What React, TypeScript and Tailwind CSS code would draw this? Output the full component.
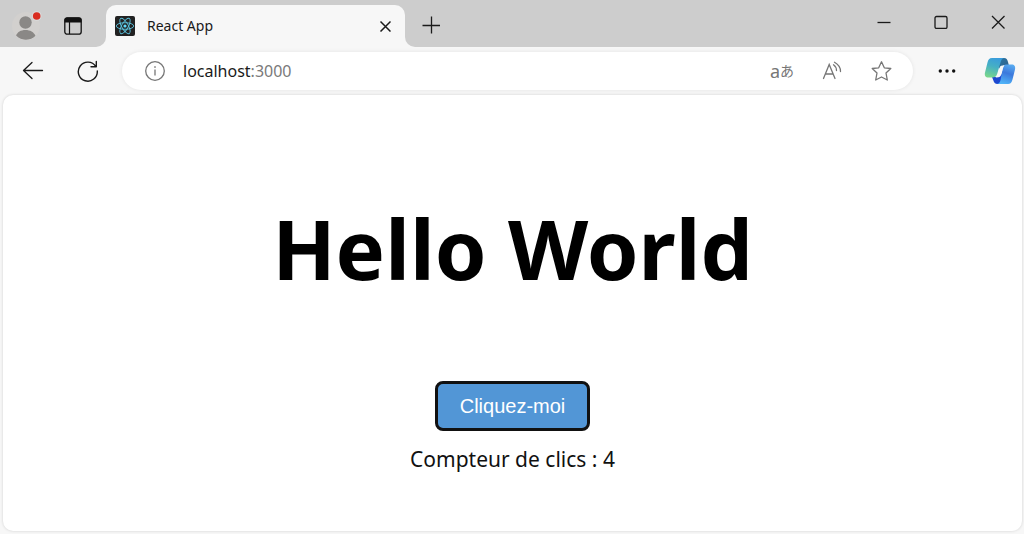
import { useState } from 'react';

const iconButton = 'flex h-8 w-8 shrink-0 items-center justify-center';

function ReactLogo() {
  return (
    <svg width="20" height="20" viewBox="0 0 20 20" className="shrink-0" aria-hidden="true">
      <rect width="20" height="20" rx="2" fill="#222222" />
      <g fill="none" stroke="#5cc4e0" strokeWidth="0.900">
        <ellipse cx="10" cy="10" rx="8.700" ry="3.300" />
        <ellipse cx="10" cy="10" rx="8.700" ry="3.300" transform="rotate(60 10 10)" />
        <ellipse cx="10" cy="10" rx="8.700" ry="3.300" transform="rotate(120 10 10)" />
      </g>
      <circle cx="10" cy="10" r="1.600" fill="#61dafb" />
    </svg>
  );
}

function Avatar() {
  return (
    <svg width="30" height="30" viewBox="0 0 30 30" aria-hidden="true">
      <clipPath id="avatar-clip">
        <circle cx="14" cy="15" r="13.700" />
      </clipPath>
      <circle cx="14" cy="15" r="14" fill="#d2d0ce" />
      <g clipPath="url(#avatar-clip)" fill="#8a8886">
        <circle cx="13.500" cy="11.500" r="6.200" />
        <path d="M4 25C5 21 9 19 13.500 19S22 21 23.500 25C21 28 17 29 14 29S6 28 4 25Z" />
      </g>
      <circle cx="24.700" cy="5" r="4.800" fill="#dcdcdc" />
      <circle cx="24.700" cy="5" r="3.800" fill="#d92c20" />
    </svg>
  );
}

function Copilot() {
  return (
    <svg width="32" height="28" viewBox="0 0 32 28" className="shrink-0" aria-hidden="true">
      <defs>
        <linearGradient id="cp-left" x1="0.600" y1="0" x2="0.300" y2="1">
          <stop offset="0" stopColor="#3a9cdc" />
          <stop offset="0.450" stopColor="#46b0c4" />
          <stop offset="1" stopColor="#78d68c" />
        </linearGradient>
        <linearGradient id="cp-right" x1="0.700" y1="0" x2="0.400" y2="1">
          <stop offset="0" stopColor="#58aaf0" />
          <stop offset="0.450" stopColor="#3c78dc" />
          <stop offset="1" stopColor="#50b4f8" />
        </linearGradient>
        <linearGradient id="cp-top" x1="0" y1="0" x2="1" y2="1">
          <stop offset="0" stopColor="#2878a8" />
          <stop offset="1" stopColor="#345c84" />
        </linearGradient>
      </defs>
      <path d="M14 1H20C22.500 1 23.300 2.500 24 5L24.800 8H21C19 8 17.500 10 16.500 13L14 9Z" fill="url(#cp-top)" />
      <path d="M8 20H13C15 19.500 16 18 17 15L18.500 19L18 27H13.500C11 27 10 25.500 9.200 23Z" fill="#1d48d0" />
      <path d="M8 1H20C18 1.500 17.200 3 16.500 5.500L13.300 16.500C12.300 19.500 11 20.500 8 20.500H4.500C1.500 20.500 .300 18.500 1 15.500L3.500 5.500C4.300 2.500 5.200 1 8 1Z" fill="url(#cp-left)" />
      <path d="M22.500 7.500H27.500C30.500 7.500 31.700 9.500 31 12.500L28.500 22.500C27.700 25.700 26.500 27 24 27H13C15.500 26.500 16 25 16.700 22.500L18.500 12C19.300 8.800 20 7.500 22.500 7.500Z" fill="url(#cp-right)" />
      <path d="M18.500 8.500H20.500C19.500 9.500 19 11 18.500 13L17.500 17C16.800 19.500 15.500 20.500 12.500 20.500H11.500C13 19.500 13.700 18 14.200 16L15.200 12C15.900 9.500 16.500 8.500 18.500 8.500Z" fill="#f7f7f7" />
    </svg>
  );
}

function TitleBar() {
  return (
    <header className="flex h-[47px] shrink-0 items-end bg-[#cdcdcd]">
      <div className="flex h-[42px] min-w-0 flex-1">
        <button type="button" aria-label="Profil" className="ml-3 flex w-[30px] items-center justify-center">
          <Avatar />
        </button>
        <button type="button" aria-label="Menu des onglets" className="ml-[22px] flex w-[18px] items-center justify-center">
          <svg width="18" height="18" viewBox="0 0 18 18" aria-hidden="true">
            <rect x="0.800" y="0.800" width="16.400" height="16.400" rx="2.500" fill="none" stroke="#111" strokeWidth="1.300" />
            <path d="M.500 5.500V3A2.500 2.500 0 0 1 3 .500H15A2.500 2.500 0 0 1 17.500 3V5.500Z" fill="#111" />
            <path d="M5.500 5V17" stroke="#111" strokeWidth="1.200" />
          </svg>
        </button>
        <div className="ml-3.5 flex w-2.5 shrink-0 items-end bg-[#cdcdcd]">
          <div className="h-2.5 w-full bg-[#f7f7f7]">
            <div className="h-full rounded-br-[10px] bg-[#cdcdcd]" />
          </div>
        </div>
        <div className="flex w-[299px] items-center rounded-t-[10px] bg-[#f7f7f7] pr-2 pl-[9px]">
          <ReactLogo />
          <span className="ml-3 flex-1 text-[14px] leading-5 text-[#1a1a1a]">React App</span>
          <button type="button" aria-label="Fermer l’onglet" className="flex h-6 w-6 items-center justify-center">
            <svg width="12" height="12" viewBox="0 0 12 12" stroke="#1a1a1a" strokeWidth="1.500" aria-hidden="true">
              <path d="M1.500 1.500L11.500 11.500M11.500 1.500L1.500 11.500" />
            </svg>
          </button>
        </div>
        <div className="flex w-2.5 shrink-0 items-end">
          <div className="h-2.5 w-full bg-[#f7f7f7]">
            <div className="h-full rounded-bl-[10px] bg-[#cdcdcd]" />
          </div>
        </div>
        <button type="button" aria-label="Nouvel onglet" className="flex h-10 w-8 shrink-0 items-center justify-center">
          <svg width="18" height="18" viewBox="0 0 18 18" stroke="#1a1a1a" strokeWidth="1.300" aria-hidden="true">
            <path d="M9.500 .500V17.500M.500 9.500H18" />
          </svg>
        </button>
      </div>
      <div className="flex h-full items-start gap-[5px]">
        <button type="button" aria-label="Réduire" className="flex h-11 w-[52px] items-center justify-center">
          <svg width="14" height="14" viewBox="0 0 14 14" stroke="#1a1a1a" strokeWidth="1.300" aria-hidden="true">
            <path d="M.500 7.500H13.500" />
          </svg>
        </button>
        <button type="button" aria-label="Agrandir" className="flex h-11 w-[52px] items-center justify-center">
          <svg width="14" height="14" viewBox="0 0 14 14" fill="none" stroke="#1a1a1a" strokeWidth="1.300" aria-hidden="true">
            <rect x="1" y="1.500" width="12" height="12" rx="1.500" />
          </svg>
        </button>
        <button type="button" aria-label="Fermer" className="flex h-11 w-[52px] items-center justify-center">
          <svg width="14" height="14" viewBox="0 0 14 14" stroke="#1a1a1a" strokeWidth="1.300" aria-hidden="true">
            <path d="M1 1L13.500 13.500M13.500 1L1 13.500" />
          </svg>
        </button>
      </div>
    </header>
  );
}

function Toolbar() {
  return (
    <nav className="flex h-12 shrink-0 items-center pr-2 pl-[17px]">
      <button type="button" aria-label="Retour" className={iconButton}>
        <svg width="22" height="20" viewBox="0 0 22 20" fill="none" stroke="#1a1a1a" strokeWidth="1.300" strokeLinecap="round" strokeLinejoin="round" aria-hidden="true">
          <path d="M10 1.500L1.500 9.500L10 17.500M1.500 9.500H20.500" />
        </svg>
      </button>
      <button type="button" aria-label="Actualiser" className={`${iconButton} ml-[23px]`}>
        <svg width="22" height="22" viewBox="0 0 22 22" fill="none" stroke="#1a1a1a" strokeWidth="1.400" strokeLinecap="round" strokeLinejoin="round" aria-hidden="true">
          <path d="M20.300 11A9.500 9.500 0 1 1 18.800 6.500M19.300 1.500V6.800H14" />
        </svg>
      </button>
      <div className="ml-[18px] flex h-[38px] min-w-0 flex-1 items-center rounded-full bg-white pr-4 pl-[17px] shadow-[0_0_4px_rgba(0,0,0,0.08)]">
        <button type="button" aria-label="Informations sur le site" className={iconButton}>
          <svg width="20" height="20" viewBox="0 0 20 20" fill="none" stroke="#767676" strokeWidth="1.300" aria-hidden="true">
            <circle cx="10" cy="10" r="9.300" />
            <path d="M10 8.500V14.500" />
            <circle cx="10" cy="6" r="0.600" fill="#767676" strokeWidth="0.600" />
          </svg>
        </button>
        <span className="ml-3 flex-1 truncate text-[16px] leading-6 text-[#1a1a1a]">
          localhost<span className="text-[#7a7a7a]">:3000</span>
        </span>
        <button type="button" aria-label="Traduire" className={`${iconButton} items-baseline font-['Noto_Sans','Noto_Sans_CJK_JP',sans-serif] text-[#767676]`}>
          <span className="text-[18px] leading-7">a</span>
          <span className="text-[14px] leading-7">あ</span>
        </button>
        <button type="button" aria-label="Lecture à voix haute" className={`${iconButton} ml-[18px]`}>
          <svg width="20" height="20" viewBox="0 0 20 20" fill="none" stroke="#767676" strokeWidth="1.300" strokeLinecap="round" aria-hidden="true">
            <path d="M1.500 17.500L7.200 3.500L13 17.500M3.300 13H11.200M11.500 3.800Q14.500 6 14.500 9.500M12.500 1.300Q18.500 4.500 18.500 10.500" />
          </svg>
        </button>
        <button type="button" aria-label="Ajouter aux favoris" className={`${iconButton} ml-[17px]`}>
          <svg width="22" height="22" viewBox="0 0 22 22" fill="none" stroke="#767676" strokeWidth="1.300" strokeLinejoin="round" aria-hidden="true">
            <path d="M11.500 1.800L14.300 7.800L20.800 8.500L16 13L17.300 20L11.500 17L5.700 20L7 13L2.200 8.500L8.700 7.800Z" />
          </svg>
        </button>
      </div>
      <button type="button" aria-label="Paramètres" className={`${iconButton} ml-[18px]`}>
        <svg width="18" height="4" viewBox="0 0 18 4" fill="#111" aria-hidden="true">
          <circle cx="2.300" cy="2" r="1.700" />
          <circle cx="9" cy="2" r="1.700" />
          <circle cx="15.700" cy="2" r="1.700" />
        </svg>
      </button>
      <button type="button" aria-label="Copilot" className={`${iconButton} ml-[21px]`}>
        <Copilot />
      </button>
    </nav>
  );
}

export default function App() {
  const [count, setCount] = useState(4);
  return (
    <div className="flex min-h-screen flex-col bg-[#f7f7f7] font-['Noto_Sans','Open_Sans',sans-serif]">
      <TitleBar />
      <Toolbar />
      <main className="mr-0.5 mb-[3px] ml-[3px] flex flex-1 flex-col items-center rounded-[10px] bg-white pt-[93px] shadow-[0_0_3px_rgba(0,0,0,0.16)]">
        <h1 className="text-center text-[83px] leading-[120px] font-bold text-black">Hello World</h1>
        <button
          type="button"
          onClick={() => setCount(count + 1)}
          className="mt-[73px] rounded-lg border-[3px] border-[#111] bg-[#5296d6] px-[22px] py-2.5 font-['Liberation_Sans',sans-serif] text-[20px] leading-6 text-white"
        >
          Cliquez-moi
        </button>
        <p className="mt-3 text-center text-[21px] leading-8 text-[#111]">Compteur de clics : {count}</p>
      </main>
    </div>
  );
}
